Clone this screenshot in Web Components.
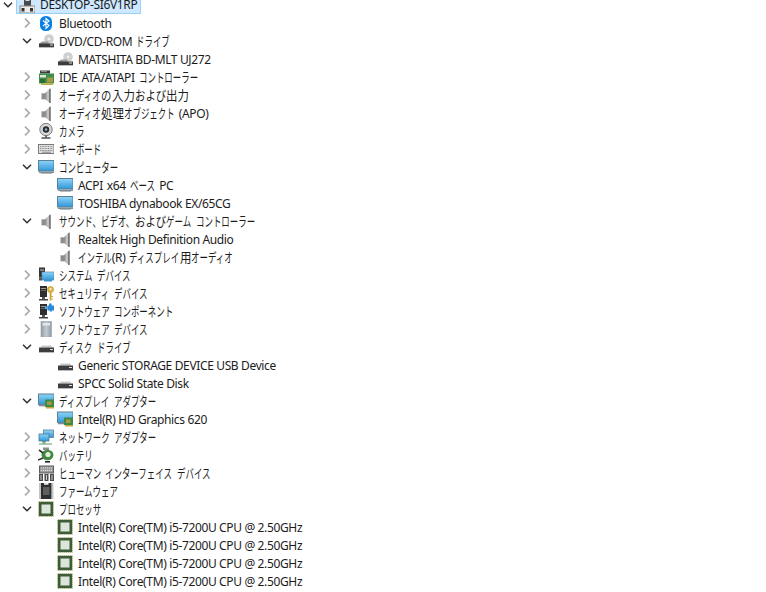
<!DOCTYPE html>
<html><head><meta charset="utf-8"><style>
html,body{margin:0;padding:0;background:#fff}
body{font:12px "Noto Sans","Noto Sans CJK JP",sans-serif;color:#1c1c1c;width:766px;height:592px;overflow:hidden}
</style></head><body>
<dm-tree id="t"></dm-tree>
<script>
const G=`<defs><linearGradient id="gs" x1="0" x2="1" y1="0" y2="0"><stop offset="0" stop-color="#858585"/><stop offset=".55" stop-color="#cfcfcf"/><stop offset="1" stop-color="#8a8a8a"/></linearGradient><linearGradient id="gm" x1="0" x2="0" y1="0" y2="1"><stop offset="0" stop-color="#8ed4f6"/><stop offset="1" stop-color="#2f97da"/></linearGradient><linearGradient id="gt" x1="0" x2="1" y1="0" y2="0"><stop offset="0" stop-color="#8e9aa3"/><stop offset=".5" stop-color="#c3ccd3"/><stop offset="1" stop-color="#8e9aa3"/></linearGradient></defs>`;
const tower=`<rect x="2" y="1" width="7" height="11" fill="#2e2e2e"/><rect x="3" y="3" width="5" height="1" fill="#9a9a9a"/><rect x="3" y="5" width="5" height="1" fill="#666"/><rect x="4" y="12" width="3" height="2" fill="#555"/><rect x="1" y="14" width="9" height="1.5" fill="#444"/>`;
const I={
computer:`<rect x="5" y="0" width="7" height="9" fill="#4a4a4a"/><rect x="6.5" y="3" width="4" height="1" fill="#ddd"/><rect x="1" y="9" width="15" height="7" fill="#ececec" stroke="#8a8a8a"/><rect x="2.5" y="11" width="3" height="3.5" fill="#333"/><rect x="11" y="11" width="3" height="3.5" fill="#333"/>`,
bt:`<rect x="2" y="1" width="12" height="15" rx="5.5" fill="#0b80e4"/><path d="M5 5.5l6 5-3 3V3.5l3 2.5-6 5" fill="none" stroke="#fff" stroke-width="1.1"/>`,
dvd:`<circle cx="11" cy="6" r="4.8" fill="#cfcfcf"/><circle cx="11" cy="6" r="1.3" fill="#f2f2f2"/><path d="M1 11l3-2.5h6l1 2.5z" fill="#9a9a9a"/><rect x="1" y="10.5" width="15" height="3.5" fill="#3c3c3c"/><rect x="12" y="11.5" width="3" height="1" fill="#d8d8d8"/><rect x="1" y="14" width="15" height=".8" fill="#aaa"/>`,
ide:`<g transform="translate(0 1)"><rect x="2" y="0.5" width="10" height="3" fill="#3b3b3b"/><rect x="3" y="1" width="6" height="1" fill="#8a8a8a"/><rect x="1" y="3.5" width="15" height="10" fill="#3f8f4a"/><rect x="2" y="5" width="6" height="2.5" fill="#e2e8d8"/><rect x="9" y="7.5" width="6" height="5" fill="#a89a44"/><rect x="2" y="9" width="5" height="4" fill="#2b6e35"/><rect x="3" y="13.5" width="12" height="1.5" fill="#c9a83a"/></g>`,
snd:`<g transform="translate(.5 .8)"><rect x="3" y="5.5" width="3.5" height="6" fill="#8d8d8d"/><path d="M6.5 5.5L12 .2v15.6l-5.5-4.5z" fill="url(#gs)"/><path d="M10.8 1.2H12v14.4h-1.2z" fill="#666"/></g>`,
cam:`<circle cx="8" cy="6.5" r="6.2" fill="#d8d8d8" stroke="#7c7c7c"/><circle cx="8" cy="6.5" r="3.2" fill="#2d2d2d"/><circle cx="8" cy="6.5" r="1.3" fill="#8fb0c8"/><rect x="7" y="12.5" width="2" height="2" fill="#666"/><rect x="3.5" y="14.2" width="9" height="1.6" fill="#5a5a5a"/>`,
kb:`<rect x="0.5" y="3.5" width="15.5" height="9" fill="#e2e2e2" stroke="#7a7a7a"/><path d="M2 5.5h13M2 7.5h13M2 9.5h13" stroke="#8a8a8a" stroke-dasharray="1 .6"/><path d="M4 11.2h9" stroke="#888"/>`,
mon:`<rect x="0.5" y="1.5" width="15.5" height="10.5" fill="url(#gm)" stroke="#5f7f95"/><rect x="1" y="12.5" width="15" height="1.5" fill="#7f8d96"/><rect x="3" y="14" width="11" height="1" fill="#b4bcc2"/>`,
sys:`<rect x="1" y="0.5" width="6" height="10" fill="#333"/><rect x="2" y="2.5" width="4" height="1" fill="#ccc"/><rect x="4" y="5" width="12" height="8" fill="url(#gm)" stroke="#5f8fb0" stroke-width=".7"/><rect x="6" y="13" width="8" height="1.5" fill="#3a92cf"/><rect x="1" y="10.5" width="3" height="3" fill="#555"/>`,
sec:tower+`<circle cx="12.5" cy="4.5" r="3" fill="#e6b84a" stroke="#b88e2a" stroke-width=".7"/><circle cx="12.5" cy="4" r=".9" fill="#fff"/><rect x="11.7" y="7" width="1.8" height="8.5" fill="#cf9f36"/><rect x="13.5" y="11" width="1.5" height="1" fill="#cf9f36"/><rect x="13.5" y="13.5" width="1.5" height="1" fill="#cf9f36"/>`,
sw:tower+`<rect x="9.5" y="2.5" width="6.5" height="5" fill="#2b8ad6"/><rect x="11" y="0.5" width="2.6" height="2.5" fill="#2b8ad6"/><rect x="7" y="3.5" width="3" height="2.5" fill="#4fa8ea"/><rect x="12" y="7" width="2" height="1.5" fill="#2b8ad6"/>`,
swd:`<rect x="3" y="0.5" width="10.5" height="15.5" fill="url(#gt)" stroke="#98a3ab" stroke-width=".6"/><rect x="4.5" y="2" width="7.5" height="2.5" fill="#e2e7ea"/>`,
disk:`<path d="M2.5 8.5l1.5-2h9l1.5 2z" fill="#c9c9c9"/><rect x="1" y="8.5" width="15" height="4.5" fill="#3e3e3e"/><rect x="12" y="10" width="3" height="1" fill="#e0e0e0"/><rect x="1" y="13" width="15" height=".8" fill="#a8a8a8"/>`,
dis:`<rect x="0.5" y="1" width="15.5" height="10.5" fill="url(#gm)" stroke="#5f7f95"/><rect x="1" y="11.5" width="7" height="1.8" fill="#7f8d96"/><rect x="7" y="6.5" width="9" height="7.5" fill="#3b8a45"/><rect x="9" y="8.5" width="4.5" height="3.5" fill="#a89a44"/><rect x="8" y="14" width="8" height="1.5" fill="#c9a83a"/>`,
net:`<rect x="5.5" y="1" width="10" height="7.5" fill="url(#gm)" stroke="#5f7f95" stroke-width=".8"/><rect x="1" y="5" width="10" height="7" fill="url(#gm)" stroke="#4f7a95" stroke-width=".8"/><path d="M4 12.8h4M1 15h13" stroke="#5f9a6a" stroke-width="1.2"/><path d="M6 12v3" stroke="#5f7f95"/>`,
bat:`<rect x="5" y="0.5" width="6" height="2.5" fill="#8d8d8d"/><ellipse cx="9.5" cy="8" rx="6" ry="5.2" fill="#3f8a3f"/><circle cx="10" cy="7.5" r="2.6" fill="#e5ece2"/><path d="M0 13l5-2M1 3l4 3" stroke="#333" stroke-width="1.6"/><path d="M7 14h5v1.6H7z" fill="#222"/>`,
hid:`<rect x="1.5" y="1" width="14" height="7" fill="#9a9a9a" stroke="#5d5d5d"/><path d="M3 3h11M3 5.5h11" stroke="#e6e6e6" stroke-dasharray="1.2 .8"/><path d="M1 9h4v7H1zM6.5 9h4v7h-4zM12 9h4v7h-4z" fill="#4c4c4c"/><path d="M3 10v5M8.5 10v5M14 10v5" stroke="#d0d0d0"/>`,
fw:`<rect x="3" y="0" width="10.5" height="16" fill="#303030"/><path d="M2 .5v15M14.5 .5v15" stroke="#8a8a8a" stroke-width="2" stroke-dasharray="1 1"/><rect x="5" y="4" width="6.5" height="8" fill="#5f5f5f"/><rect x="6" y="0" width="4.5" height="1.8" fill="#e6e6e6"/>`,
cpu:`<rect x="0" y="0" width="16" height="16" fill="#d5d8a8"/><rect x=".8" y=".8" width="14.4" height="14.4" fill="#3e5c3a"/><rect x="3.5" y="3.5" width="9" height="9" fill="#dbe5da"/><path d="M.5 0v16M15.5 0v16M0 .5h16M0 15.5h16" stroke="#fff" stroke-width=".8" stroke-dasharray=".7 1.3" opacity=".7"/>`
};
const rows=[
[0,'v','computer','DESKTOP-SI6V1RP'],
[1,'>','bt','Bluetooth'],
[1,'v','dvd','DVD/CD-ROM ドライブ'],
[2,'','dvd','MATSHITA BD-MLT UJ272'],
[1,'>','ide','IDE ATA/ATAPI コントローラー'],
[1,'>','snd','オーディオの入力および出力'],
[1,'>','snd','オーディオ処理オブジェクト (APO)'],
[1,'>','cam','カメラ'],
[1,'>','kb','キーボード'],
[1,'v','mon','コンピューター'],
[2,'','mon','ACPI x64 ベース PC'],
[2,'','mon','TOSHIBA dynabook EX/65CG'],
[1,'v','snd','サウンド、ビデオ、およびゲーム コントローラー'],
[2,'','snd','Realtek High Definition Audio'],
[2,'','snd','インテル(R) ディスプレイ用オーディオ'],
[1,'>','sys','システム デバイス'],
[1,'>','sec','セキュリティ デバイス'],
[1,'>','sw','ソフトウェア コンポーネント'],
[1,'>','swd','ソフトウェア デバイス'],
[1,'v','disk','ディスク ドライブ'],
[2,'','disk','Generic STORAGE DEVICE USB Device'],
[2,'','disk','SPCC Solid State Disk'],
[1,'v','dis','ディスプレイ アダプター'],
[2,'','dis','Intel(R) HD Graphics 620'],
[1,'>','net','ネットワーク アダプター'],
[1,'>','bat','バッテリ'],
[1,'>','hid','ヒューマン インターフェイス デバイス'],
[1,'>','fw','ファームウェア'],
[1,'v','cpu','プロセッサ'],
[2,'','cpu','Intel(R) Core(TM) i5-7200U CPU @ 2.50GHz'],
[2,'','cpu','Intel(R) Core(TM) i5-7200U CPU @ 2.50GHz'],
[2,'','cpu','Intel(R) Core(TM) i5-7200U CPU @ 2.50GHz'],
[2,'','cpu','Intel(R) Core(TM) i5-7200U CPU @ 2.50GHz']];
/* narrow kana: each run of CJK glyphs is squeezed to the condensed widths of the original UI font */
class JpText extends HTMLElement{
 constructor(){super();this.attachShadow({mode:'open'})}
 connectedCallback(){
  const s=this.getAttribute('text');
  const scale=c=>/[\u30a0-\u30ff\u3001]/.test(c)?.65:/[\u3040-\u309f]/.test(c)?.8:.88;
  const esc=c=>c.replace(/&/g,'&amp;').replace(/</g,'&lt;');
  const hasJ=/[\u3001\u3040-\u30ff\u4e00-\u9fff]/.test(s);
  const parts=s.split(/([\u30a0-\u30ff\u3001]+|[\u3040-\u309f]+|[\u4e00-\u9fff]+)/).filter(Boolean).map(p=>{
    if(!/[\u3001\u3040-\u30ff\u4e00-\u9fff]/.test(p))return `<span class="l${hasJ?' w':''}">${esc(p)}</span>`;
    const k=scale(p[0]);
    return `<span class="j" style="width:${(p.length*13*k).toFixed(2)}px"><span style="transform:scaleX(${k})">${p}</span></span>`;
  }).join('');
  this.shadowRoot.innerHTML=`<style>
  :host{display:inline-block;white-space:nowrap;${hasJ?'margin-top:-2px;':''}}
  .l{letter-spacing:-.36px;white-space:pre}
  .w{word-spacing:1.2px}
  .j{display:inline-block;overflow:visible;vertical-align:baseline}
  .j span{display:inline-block;transform-origin:0 50%;font:13px "Noto Sans CJK JP",sans-serif;line-height:16px}
  </style>${parts}`;
 }
}
customElements.define('jp-text',JpText);
class DmRow extends HTMLElement{
 constructor(){super();this.attachShadow({mode:'open'})}
 connectedCallback(){
  const l=+this.getAttribute('level'),c=this.getAttribute('caret'),ic=this.getAttribute('icon');
  const car=c==='v'?'<path d="M1 2.8l4 4 4-4" stroke="#2f2f2f" stroke-width="1.5" fill="none"/>':c==='>'?'<path d="M3 .6L7.3 5 3 9.4" stroke="#a8a8a8" stroke-width="1.6" fill="none"/>':'';
  const root=this.hasAttribute('root');
  this.shadowRoot.innerHTML=`<style>
  :host{display:flex;align-items:center;height:18px;padding-left:calc(${l} * 19px + 3px)}
  :host([root]){height:14px;align-items:flex-start}
  .c{width:10px;height:10px;flex:none;margin-right:6px}
  .i{width:16px;height:16px;flex:none;margin-right:5px}
  .t{white-space:nowrap;line-height:16px;padding-top:2px}
  .box{display:flex;align-items:flex-start;background:#cde8ff;border:1px solid #9ad0f5;border-top:0;padding:0 3px 0 2px;margin-left:-2px;height:13px}
  .box .i{height:13px;margin-right:5px}
  .box .t{line-height:10px;height:10px;overflow:visible;padding-top:0}
  :host([root]) .c{margin-right:5px}
  </style><svg class="c" viewBox="0 0 10 10">${car}</svg>${
   root?`<div class="box"><svg class="i" viewBox="0 3 16 13">${G}${I[ic]}</svg><span class="t"><slot></slot></span></div>`
       :`<svg class="i" viewBox="0 0 16 16">${G}${I[ic]}</svg><span class="t"><slot></slot></span>`}`;
 }
}
customElements.define('dm-row',DmRow);
class DmTree extends HTMLElement{
 constructor(){super();this.attachShadow({mode:'open'}).innerHTML=`<style>:host{display:block}</style><slot></slot>`}
}
customElements.define('dm-tree',DmTree);
const t=document.getElementById('t');
rows.forEach((r,i)=>{const e=document.createElement('dm-row');e.setAttribute('level',r[0]);e.setAttribute('caret',r[1]);e.setAttribute('icon',r[2]);if(!i)e.setAttribute('root','');const j=document.createElement('jp-text');j.setAttribute('text',r[3]);e.appendChild(j);t.appendChild(e)});
</script></body></html>
